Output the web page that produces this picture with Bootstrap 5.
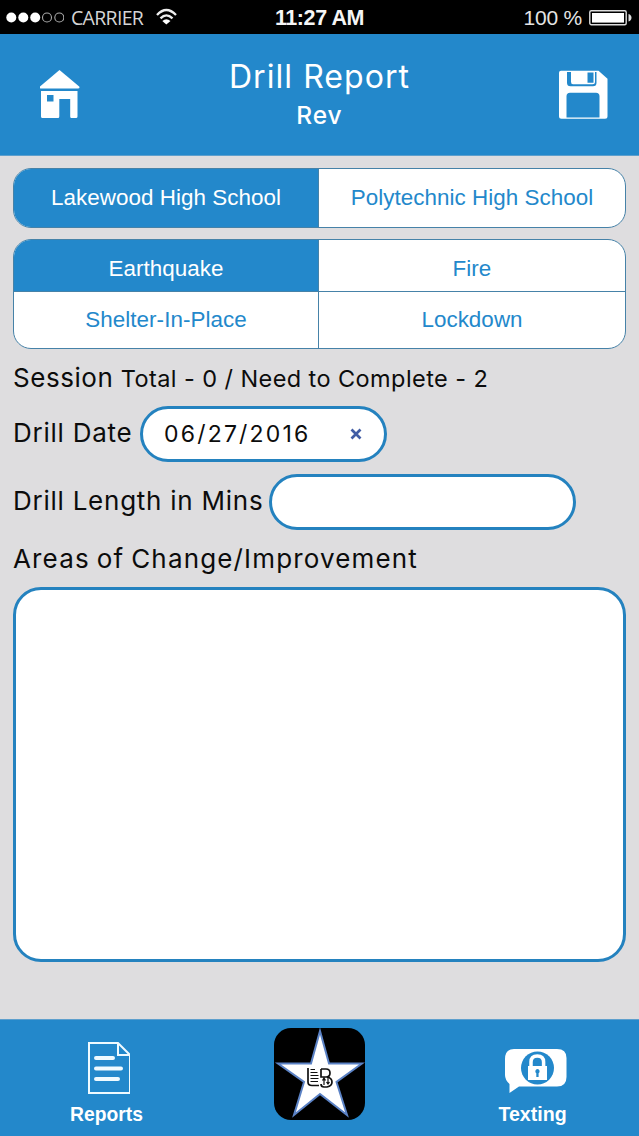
<!DOCTYPE html>
<html lang="en">
<head>
<meta charset="utf-8">
<meta name="viewport" content="width=device-width, initial-scale=1">
<title>Drill Report</title>
<link href="https://cdn.jsdelivr.net/npm/bootstrap@5.3.0/dist/css/bootstrap.min.css" rel="stylesheet">
<style>
:root{--brand:#2388cb;--line:#4682a8}
body{font-family:"Liberation Sans",Arial,sans-serif;background:#dedddf;color:#0c0c0c}
.screen{height:1136px;overflow:hidden}
svg{display:block;flex:none}
.status{height:34px;background:#000;color:#e4e4e4;line-height:34px;white-space:nowrap}
.status .col{padding:0}
.carrier{font-family:"Open Sans",sans-serif;font-size:19.5px;letter-spacing:-.7px;margin-left:7px;width:77px;padding-top:1px;color:#d5d5d5}
.clock{font-weight:700;font-size:21.5px;letter-spacing:-.4px;color:#f5f5f5;padding-top:1px}
.power{font-size:21px;letter-spacing:-.2px;margin-right:7px;padding-top:1px}
.topbar{height:122px;background:var(--brand);color:#fff;border-bottom:1px solid #5d9fcd;padding:0 31px 0 40px;font-family:Inter,sans-serif}
.topbar h1{font-size:32px;line-height:38px;letter-spacing:1.05px;font-weight:400;margin:24px 0 0}
.topbar h2{font-size:24.5px;line-height:38px;letter-spacing:.9px;font-weight:500;margin:0}
.side{width:50px;padding-top:36px}
.side-home{width:41px}
.content{padding:12px 13px 0}
.choice{display:grid;grid-template-columns:305px 1fr;border:1px solid var(--line);border-radius:18px;overflow:hidden;background:#fff}
.choice .btn{font-size:22.4px;line-height:1;color:var(--brand);border:0;border-radius:0;padding:0;letter-spacing:.05px}
.choice .btn:nth-child(odd){border-right:1px solid var(--line)}
.choice .btn.active{background:var(--brand);color:#fff}
.schools{height:60px;margin-bottom:11px}
.drills{height:110px;grid-template-rows:51px 1fr;margin-bottom:13px}
.drills .btn:nth-child(n+3){border-top:1px solid var(--line)}
.drills .btn:nth-child(-n+2){padding-top:8px}
.label-text{font-family:Inter,sans-serif;font-size:26px;line-height:32px;white-space:nowrap}
.summary{height:32px}
.t-session{letter-spacing:.55px}
.t-total{font-size:23.5px;letter-spacing:.42px}
.t-date,.t-length{letter-spacing:.75px;margin-top:-2px}
.t-areas{letter-spacing:1.15px;word-spacing:-1.5px;margin:13px 0 12px}
.t-value{letter-spacing:2.2px}
.box{border:3.5px solid #2482bf;background:#fff}
.pill{border-radius:28px;height:56px}
.date{width:247px;font-family:Inter,sans-serif;font-size:23px;padding:0 22px 0 21px}
.row-date{width:374px;margin-top:12px}
.row-length{width:563px;margin-top:12px}
#mins{width:307px}
.notes{height:375px;border-radius:28px;resize:none;padding:16px}
.bottombar{height:117px;background:var(--brand);color:#fff;border-top:1px solid #5d9fcd;font-size:20px;font-weight:700;line-height:24px}
.tab{width:213px}
.tab svg{margin-top:20px}
.tab svg.chat{margin-top:27px}
.tab .rp{font-size:19.3px}
.tab .tx{font-size:19.6px}
</style>
</head>
<body>
<div class="screen d-flex flex-column">
  <div class="status d-flex align-items-center">
    <div class="col d-flex align-items-center">
      <svg class="ms-1" width="60" height="34" viewBox="0 0 60 34"><g fill="#fff"><circle cx="7.3" cy="17.5" r="5"/><circle cx="19.3" cy="17.5" r="5"/><circle cx="31.2" cy="17.5" r="5"/></g><g fill="none" stroke="#aaa" stroke-width="1.1"><circle cx="43" cy="17.5" r="4.5"/><circle cx="55.3" cy="17.5" r="4.5"/></g></svg>
      <span class="carrier">CARRIER</span>
      <svg class="ms-1" width="30" height="34" viewBox="0 0 30 34"><g fill="none" stroke="#eee" stroke-width="2.3"><path d="M5 15Q14.300 5 24 15M8.500 18.400Q14.300 12.200 20.500 18.400"/></g><path d="M10.300 21Q14.300 17.500 18.500 21L14.300 24.500Z" fill="#fff"/></svg>
    </div>
    <span class="clock">11:27 AM</span>
    <div class="col d-flex align-items-center justify-content-end">
      <span class="power">100 %</span>
      <svg width="50" height="34" viewBox="0 0 50 34"><rect x=".8" y="10.800" width="36.400" height="14" rx="1.500" fill="none" stroke="#ddd" stroke-width="1.400"/><rect x="3" y="13" width="32" height="9.600" fill="#fff"/><path d="M39.500 14Q42.500 15 42.500 17.800T39.500 21.600Z" fill="#ddd"/></svg>
    </div>
  </div>

  <header class="topbar d-flex justify-content-between">
    <a class="side side-home" href="#" aria-label="Home"><svg width="41" height="56" viewBox="0 0 41 56"><path d="M19.500 0 39.200 16.500Q40.200 18.500 38 18.500H1Q-1 18.500 0 16.500Z" fill="#fff"/><path fill-rule="evenodd" d="M1 21H37.500V46.500Q37.500 48 36 48H31.500Q30.200 48 30.200 46.500V29H19.300V46.500Q19.300 48 18 48H2.500Q1 48 1 46.500ZM7 25V31.500H13.500V25Z" fill="#fff"/></svg></a>
    <div class="text-center"><h1>Drill Report</h1><h2>Rev</h2></div>
    <a class="side" href="#" aria-label="Save"><svg class="ms-auto" width="49" height="53" viewBox="0 0 49 53"><path transform="translate(0 .8)" fill="#fff" fill-rule="evenodd" d="M2 0H39.500L48.500 8V45.500Q48.500 48 46 48H2.500Q0 48 0 45.500V2Q0 0 2 0ZM8 1.200V12Q8 15.500 11.500 15.500H34Q37.500 15.500 37.500 12V1.200H36V11Q36 13.500 33.500 13.500H14Q12 13.500 12 11V1.200ZM28.500 1.800V12H34.500V1.800ZM11 22Q7.500 22 7.500 25.500V46.700H40.500V25.500Q40.500 22 37 22Z"/></svg></a>
  </header>

  <main class="content flex-grow-1">
    <div class="choice schools">
      <button class="btn active">Lakewood High School</button>
      <button class="btn">Polytechnic High School</button>
    </div>
    <div class="choice drills">
      <button class="btn active">Earthquake</button>
      <button class="btn">Fire</button>
      <button class="btn">Shelter-In-Place</button>
      <button class="btn">Lockdown</button>
    </div>
    <div class="label-text summary"><span class="t-session">Session</span> <span class="t-total">Total - 0 / Need to Complete - 2</span></div>
    <div class="row-date d-flex align-items-center justify-content-between">
      <label class="label-text t-date">Drill Date</label>
      <div class="box pill date d-flex align-items-center justify-content-between">
        <span class="t-value">06/27/2016</span>
        <svg width="12" height="12" viewBox="0 0 12 12"><path d="M1.500 1.500 10.500 10.500M10.500 1.500 1.500 10.500" stroke="#415da5" stroke-width="2.700"/></svg>
      </div>
    </div>
    <div class="row-length d-flex align-items-center justify-content-between">
      <label class="label-text t-length" for="mins">Drill Length in Mins</label>
      <input id="mins" class="box pill px-3" type="text">
    </div>
    <label class="label-text t-areas d-block" for="notes">Areas of Change/Improvement</label>
    <textarea id="notes" class="box notes d-block w-100"></textarea>
  </main>

  <nav class="bottombar d-flex justify-content-between">
    <div class="tab d-flex flex-column align-items-center">
      <svg width="46" height="63" viewBox="0 0 46 63"><g transform="translate(4 2)" fill="none" stroke="#effaff"><path d="M1 1H30L42 13V51H1ZM30 1V13H42" stroke-width="2"/><path d="M8 16H25M8 26.500H33M8 37H30" stroke-width="4" stroke-linecap="round"/></g></svg>
      <span class="rp">Reports</span>
    </div>
    <svg class="logo mt-2" width="91" height="92" viewBox="0 0 91 92"><rect width="91" height="92" rx="17"/><path d="M46 3 55 35.500H88L62.500 54 73 87 46 66 20 87 30 54 4 35.500H37Z" fill="#fff" stroke="#5b82c5" stroke-width="2"/><g fill="none" stroke="#111" stroke-width="1.700"><path d="M34 40V54Q34 57.500 38 57.500H45M47 41H52Q56 41 56 45T52 49H47V41M53 49Q58 50 58 54T53 59H50Q47 59 47 56"/><path d="M50 49V57M54 48V55M48.500 52.500 50 50 51.500 52.500M52.500 54 54 56 55.500 54" stroke-width="1.200"/><path d="M36.500 41.500H41M36.500 44.500H43.500M36.500 47.500H44.500M36.500 50.500H44.500M36.500 53.500H44" stroke-width="1"/></g></svg>
    <div class="tab d-flex flex-column align-items-center">
      <svg class="chat" width="68" height="55" viewBox="0 0 68 55"><g transform="translate(6 2)"><path d="M9 0H52Q61.500 0 61.500 9V28Q61.500 37.500 52 37.500H14L4.500 44V35Q0 31 0 26V10Q0 0 9 0Z" fill="#fff"/><circle cx="32.500" cy="19" r="16.500" fill="#2388cb"/><path d="M26 18V13Q26 7 32.300 7T38.600 13V18" fill="none" stroke="#fff" stroke-width="3.500"/><rect x="23" y="17" width="19" height="14" fill="#fff"/><path d="M32.500 20A2.300 2.300 0 0 1 33.600 24.200V28H31.300V24.200A2.300 2.300 0 0 1 32.500 20Z" fill="#2388cb"/></g></svg>
      <span class="tx">Texting</span>
    </div>
  </nav>
</div>
<script src="https://cdn.jsdelivr.net/npm/bootstrap@5.3.0/dist/js/bootstrap.bundle.min.js"></script>
</body>
</html>
